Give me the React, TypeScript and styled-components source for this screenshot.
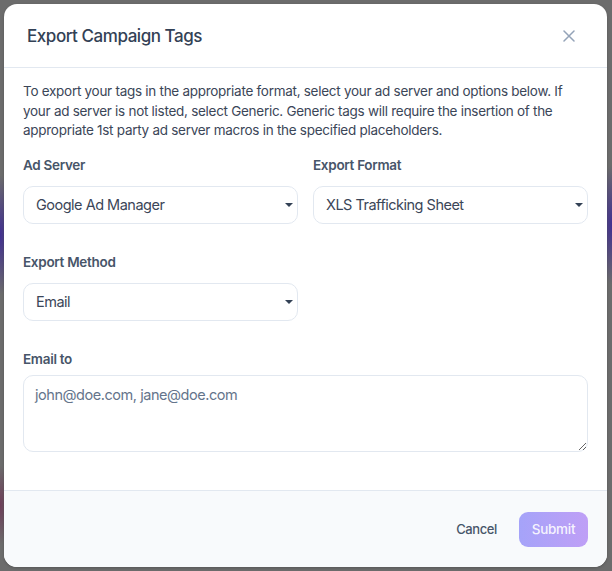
import * as React from "react";
import styled, { createGlobalStyle } from "styled-components";

const GlobalStyle = createGlobalStyle`
  html, body {
    margin: 0;
    padding: 0;
    height: 100%;
  }
  body {
    font-family: Inter, "Noto Sans", "Liberation Sans", sans-serif;
    letter-spacing: -0.025em;
    background:
      radial-gradient(ellipse 14px 60px at 0px 235px, rgba(60, 40, 150, 0.9), rgba(60, 40, 150, 0) 100%),
      radial-gradient(ellipse 14px 60px at 612px 225px, rgba(60, 40, 150, 0.9), rgba(60, 40, 150, 0) 100%),
      radial-gradient(ellipse 10px 40px at 0px 505px, rgba(110, 40, 80, 0.7), rgba(110, 40, 80, 0) 100%),
      #6c6c6c;
  }
`;

const Backdrop = styled.div`
  padding: 4px 5px 4px 4px;
`;

const Modal = styled.div`
  width: 603px;
  height: 563px;
  background: #ffffff;
  border-radius: 13px;
  overflow: hidden;
  display: flex;
  flex-direction: column;
  box-shadow: 0 1px 3px rgba(0, 0, 0, 0.2);
`;

const Header = styled.div`
  height: 63px;
  flex-shrink: 0;
  display: flex;
  align-items: center;
  justify-content: space-between;
  padding: 0 32px 0 23px;
  border-bottom: 1px solid #e2e8f0;
`;

const Title = styled.h2`
  margin: 0;
  font-size: 17px;
  font-weight: 500;
  color: #334155;
  letter-spacing: -0.45px;
`;

const CloseButton = styled.button`
  border: 0;
  background: none;
  padding: 0;
  display: flex;
  color: #94a3b8;
  cursor: pointer;
`;

const Body = styled.div`
  flex: 1;
  padding: 14px 19px 0 19px;
`;

const Intro = styled.p`
  margin: 0 0 14px;
  font-size: 13.5px;
  line-height: 19.6px;
  color: #3b4658;
  letter-spacing: -0.28px;
`;

const Row = styled.div`
  display: grid;
  grid-template-columns: 1fr 1fr;
  column-gap: 15px;
  margin-bottom: 28px;
`;

const Field = styled.div<{ $gap?: number }>`
  display: flex;
  flex-direction: column;
  gap: ${(p) => p.$gap ?? 11}px;
`;

const Label = styled.label`
  font-size: 13.5px;
  line-height: 20px;
  font-weight: 600;
  color: #475569;
  letter-spacing: -0.3px;
`;

const SelectBox = styled.div`
  position: relative;
  height: 38px;
  box-sizing: border-box;
  border: 1px solid #e2e8f0;
  border-radius: 10px;
  background: #fff;
  display: flex;
  align-items: center;
  padding: 0 12px;
  font-size: 14.5px;
  letter-spacing: -0.5px;
  color: #3b4658;
`;

const Caret = styled.span`
  position: absolute;
  right: 4px;
  top: 50%;
  margin-top: -2px;
  width: 0;
  height: 0;
  border-left: 4px solid transparent;
  border-right: 4px solid transparent;
  border-top: 4px solid #334155;
`;

const TextArea = styled.textarea`
  height: 77px;
  box-sizing: border-box;
  border: 1px solid #e2e8f0;
  border-radius: 10px;
  padding: 10px 11px;
  font-family: inherit;
  font-size: 14.5px;
  letter-spacing: -0.45px;
  color: #334155;
  resize: vertical;
  outline: none;
  &::placeholder {
    color: #64748b;
  }
`;

const Footer = styled.div`
  height: 76px;
  flex-shrink: 0;
  background: #f8fafc;
  border-top: 1px solid #e2e8f0;
  display: flex;
  align-items: center;
  justify-content: flex-end;
  gap: 22px;
  padding: 0 19px;
`;

const TextButton = styled.button`
  border: 0;
  background: none;
  font-family: inherit;
  font-size: 13px;
  font-weight: 500;
  letter-spacing: -0.4px;
  color: #475569;
  cursor: pointer;
  padding: 0;
`;

const PrimaryButton = styled.button`
  height: 35px;
  width: 69px;
  border: 0;
  border-radius: 9px;
  background: linear-gradient(90deg, #a5a3f9, #bf9ff6);
  color: rgba(255, 255, 255, 0.9);
  font-family: inherit;
  font-size: 13.5px;
  font-weight: 500;
  letter-spacing: -0.3px;
  cursor: not-allowed;
`;

const Select = ({ value }: { value: string }) => (
  <SelectBox>
    {value}
    <Caret />
  </SelectBox>
);

const App = () => (
  <>
    <GlobalStyle />
    <Backdrop>
      <Modal>
        <Header>
          <Title>Export Campaign Tags</Title>
          <CloseButton aria-label="Close">
            <svg width="12" height="12" viewBox="0 0 12 12" fill="none">
              <path d="M1 1l10 10M11 1L1 11" stroke="currentColor" strokeWidth="1.5" strokeLinecap="round" />
            </svg>
          </CloseButton>
        </Header>
        <Body>
          <Intro>
            To export your tags in the appropriate format, select your ad server and options below. If
            your ad server is not listed, select Generic. Generic tags will require the insertion of the
            appropriate 1st party ad server macros in the specified placeholders.
          </Intro>
          <Row>
            <Field>
              <Label>Ad Server</Label>
              <Select value="Google Ad Manager" />
            </Field>
            <Field>
              <Label>Export Format</Label>
              <Select value="XLS Trafficking Sheet" />
            </Field>
          </Row>
          <Row>
            <Field>
              <Label>Export Method</Label>
              <Select value="Email" />
            </Field>
          </Row>
          <Field $gap={6}>
            <Label>Email to</Label>
            <TextArea placeholder="john@doe.com, jane@doe.com" />
          </Field>
        </Body>
        <Footer>
          <TextButton>Cancel</TextButton>
          <PrimaryButton disabled>Submit</PrimaryButton>
        </Footer>
      </Modal>
    </Backdrop>
  </>
);

export default App;
